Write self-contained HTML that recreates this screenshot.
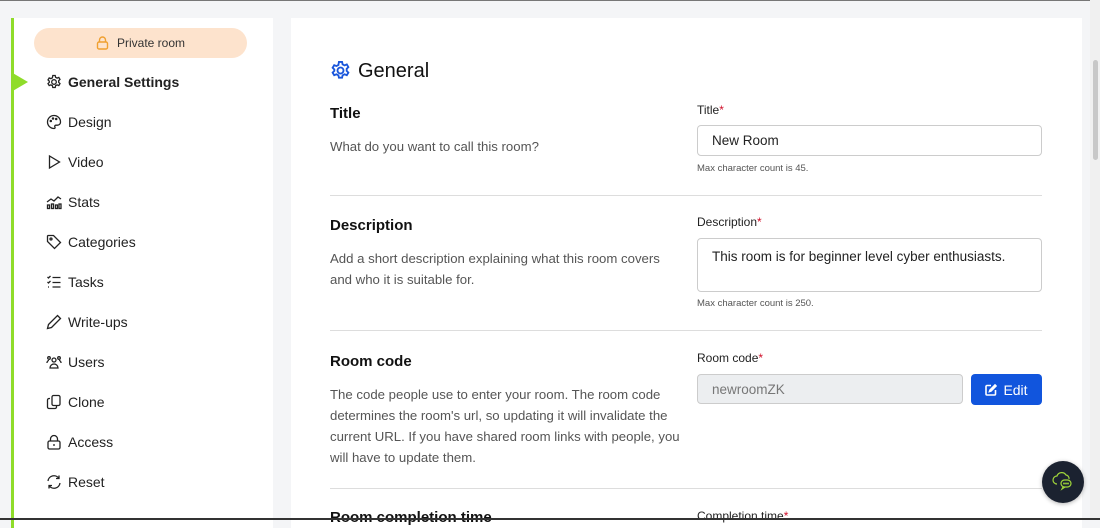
<!DOCTYPE html>
<html><head><style>
*{box-sizing:border-box;margin:0;padding:0}
body{width:1100px;height:520px;overflow:hidden;background:#f4f5f7;font-family:"Liberation Sans",sans-serif;color:#1f2328;position:relative}
.topline{position:absolute;left:0;top:0;width:1100px;height:1px;background:#777}
.botline{position:absolute;left:0;top:518px;width:1100px;height:2px;background:#333}
.side{position:absolute;left:11px;top:18px;width:262px;height:510px;background:#fff;border-left:3px solid #8fdc2a}
.pill{position:absolute;left:20px;top:10px;width:213px;height:30px;border-radius:15px;background:#fde3cd;font-size:12px;color:#333;display:flex;align-items:center;justify-content:center;gap:8px}
.arrow{position:absolute;left:-3px;top:54px;width:0;height:0;border-top:10px solid transparent;border-bottom:10px solid transparent;border-left:17px solid #8fdc2a}
.item{position:absolute;left:46px;height:20px;display:flex;align-items:center;font-size:14px;color:#222}
.item svg{width:16px;height:16px;margin-right:6px;fill:none;stroke:#222;stroke-width:1.3}
.main{position:absolute;left:291px;top:18px;width:791px;height:510px;background:#fff}
.scroll{position:absolute;left:1090px;top:0;width:10px;height:520px;background:#f0f0f0}
.thumb{position:absolute;left:1093px;top:60px;width:5px;height:100px;background:#c8c8c8;border-radius:3px}
.abs{position:absolute}
.h{font-size:15px;font-weight:bold;color:#111}
.d{font-size:13.2px;color:#555;line-height:21px}
.lbl{font-size:12px;color:#222}
.lbl b{color:#d0102a;font-weight:normal}
.inp{border:1px solid #ccc;border-radius:4px;font-size:13.5px;padding-left:14px;color:#222}
.help{font-size:9.5px;color:#555}
.hr{position:absolute;left:330px;width:712px;height:1px;background:#ddd}
</style></head><body>
<div class="topline"></div>
<div class="side">
 <div class="pill"><svg width="13" height="14" viewBox="0 0 13 14"><rect x="1.5" y="6" width="10" height="7" rx="1.5" fill="none" stroke="#f0a030" stroke-width="1.4"/><path d="M3.5 6V4a3 3 0 0 1 6 0v2" fill="none" stroke="#f0a030" stroke-width="1.4"/></svg>Private room</div>
 <div class="arrow"></div>
</div>
<div class="item" style="top:72px;font-weight:bold"><svg viewBox="0 0 16 16"><circle cx="8" cy="8" r="2.3"/><path d="M6.8 1.5h2.4l.4 1.8 1.5.8 1.7-.7 1.2 2-1.3 1.3v1.6l1.3 1.3-1.2 2-1.7-.7-1.5.8-.4 1.8H6.8l-.4-1.8-1.5-.8-1.7.7-1.2-2 1.3-1.3V7.2L2 5.9l1.2-2 1.7.7 1.5-.8z"/></svg>General Settings</div>
<div class="item" style="top:112px"><svg viewBox="0 0 16 16"><path d="M8 1.5a6.5 6.5 0 0 0 0 13c1 0 1.3-.8.9-1.5-.5-.9 0-1.8 1-1.8h1.6a3 3 0 0 0 3-3A6.5 6.5 0 0 0 8 1.5z"/><circle cx="4.8" cy="7" r=".6"/><circle cx="7" cy="4.5" r=".6"/><circle cx="10.2" cy="5" r=".6"/></svg>Design</div>
<div class="item" style="top:152px"><svg viewBox="0 0 16 16"><path d="M3.5 2v12l10-6z"/></svg>Video</div>
<div class="item" style="top:192px"><svg viewBox="0 0 16 16"><path d="M1 8l4-3 3 2 4-4 3 2"/><rect x="1.5" y="11" width="2" height="3.5"/><rect x="5.5" y="10" width="2" height="4.5"/><rect x="9.5" y="11" width="2" height="3.5"/><rect x="13" y="10" width="2" height="4.5"/></svg>Stats</div>
<div class="item" style="top:232px"><svg viewBox="0 0 16 16"><path d="M1.5 2v5.5l7 7 6-6-7-7H2z"/><circle cx="5" cy="5" r="1"/></svg>Categories</div>
<div class="item" style="top:272px"><svg viewBox="0 0 16 16"><path d="M1.5 3l1 1 2-2M1.5 8l1 1 2-2M6.5 3.5h8M6.5 8.5h8M6.5 13h8M2 13h1"/></svg>Tasks</div>
<div class="item" style="top:312px"><svg viewBox="0 0 16 16"><path d="M11.5 1.5l3 3-9 9-4 1 1-4z"/></svg>Write-ups</div>
<div class="item" style="top:352px"><svg viewBox="0 0 16 16"><circle cx="8" cy="6" r="2"/><path d="M4 14c0-2.5 2-4 4-4s4 1.5 4 4z"/><circle cx="3" cy="4" r="1.3"/><circle cx="13" cy="4" r="1.3"/><path d="M1 9c0-1.5 1-2.5 2-2.5M15 9c0-1.5-1-2.5-2-2.5"/></svg>Users</div>
<div class="item" style="top:392px"><svg viewBox="0 0 16 16"><rect x="6" y="1.5" width="8" height="10" rx="1.5"/><path d="M4 4.5H3a1.5 1.5 0 0 0-1.5 1.5v7A1.5 1.5 0 0 0 3 14.5h6a1.5 1.5 0 0 0 1.5-1.5v-1"/></svg>Clone</div>
<div class="item" style="top:432px"><svg viewBox="0 0 16 16"><rect x="2" y="7" width="12" height="8" rx="1.5"/><path d="M4.5 7V5a3.5 3.5 0 0 1 7 0v2M8 10v2"/></svg>Access</div>
<div class="item" style="top:472px"><svg viewBox="0 0 16 16"><path d="M2 7a6 6 0 0 1 11-2.5M14 9a6 6 0 0 1-11 2.5M13 1.5v3h-3M3 14.5v-3h3"/></svg>Reset</div>

<div class="main"></div>
<svg class="abs" style="left:330px;top:60px" width="21" height="21" viewBox="0 0 16 16" fill="none" stroke="#1a56db" stroke-width="1.4"><circle cx="8" cy="8" r="2.3"/><path d="M6.8 1.5h2.4l.4 1.8 1.5.8 1.7-.7 1.2 2-1.3 1.3v1.6l1.3 1.3-1.2 2-1.7-.7-1.5.8-.4 1.8H6.8l-.4-1.8-1.5-.8-1.7.7-1.2-2 1.3-1.3V7.2L2 5.9l1.2-2 1.7.7 1.5-.8z"/></svg>
<div class="abs" style="left:358px;top:60px;font-size:20px;color:#111">General</div>

<div class="abs h" style="left:330px;top:105px">Title</div>
<div class="abs d" style="left:330px;top:136px">What do you want to call this room?</div>
<div class="abs lbl" style="left:697px;top:103px">Title<b>*</b></div>
<div class="abs inp" style="left:697px;top:125px;width:345px;height:31px;line-height:30px">New Room</div>
<div class="abs help" style="left:697px;top:163px">Max character count is 45.</div>
<div class="hr" style="top:195px"></div>

<div class="abs h" style="left:330px;top:217px">Description</div>
<div class="abs d" style="left:330px;top:248px">Add a short description explaining what this room covers<br>and who it is suitable for.</div>
<div class="abs lbl" style="left:697px;top:215px">Description<b>*</b></div>
<div class="abs inp" style="left:697px;top:238px;width:345px;height:54px;padding-top:10px">This room is for beginner level cyber enthusiasts.</div>
<div class="abs help" style="left:697px;top:298px">Max character count is 250.</div>
<div class="hr" style="top:330px"></div>

<div class="abs h" style="left:330px;top:353px">Room code</div>
<div class="abs d" style="left:330px;top:384px">The code people use to enter your room. The room code<br>determines the room's url, so updating it will invalidate the<br>current URL. If you have shared room links with people, you<br>will have to update them.</div>
<div class="abs lbl" style="left:697px;top:351px">Room code<b>*</b></div>
<div class="abs inp" style="left:697px;top:374px;width:266px;height:30px;line-height:29px;background:#eceef0;color:#777">newroomZK</div>
<div class="abs" style="left:971px;top:374px;width:71px;height:31px;background:#1155dd;border-radius:4px;color:#fff;font-size:14px;display:flex;align-items:center;justify-content:center;gap:6px"><svg width="12" height="12" viewBox="0 0 12 12" fill="none" stroke="#fff" stroke-width="1.6"><path d="M6 1.5H2a1 1 0 0 0-1 1V10a1 1 0 0 0 1 1h7.5a1 1 0 0 0 1-1V6"/><path d="M10 1l1 1-5 5-1.5.5L5 6z" fill="#fff"/></svg>Edit</div>
<div class="hr" style="top:488px"></div>
<div class="abs h" style="left:330px;top:509px">Room completion time</div>
<div class="abs lbl" style="left:697px;top:509px">Completion time<b>*</b></div>

<div class="abs" style="left:1042px;top:461px;width:42px;height:42px;border-radius:50%;background:#1b2230;box-shadow:0 1px 4px rgba(0,0,0,.3)"><svg width="42" height="42" viewBox="0 0 42 42" fill="none" stroke="#9fd53a" stroke-width="1.2"><path d="M15 23a4 4 0 0 1 0-8 5 5 0 0 1 9-1 3.5 3.5 0 0 1 3 4"/><rect x="19" y="19" width="10" height="7" rx="3.5"/><path d="M21 26l-1 2 3-2"/><circle cx="22" cy="22.5" r=".4"/><circle cx="24" cy="22.5" r=".4"/><circle cx="26" cy="22.5" r=".4"/></svg></div>
<div class="scroll"></div><div class="thumb"></div>
<div class="botline"></div>
</body></html>
